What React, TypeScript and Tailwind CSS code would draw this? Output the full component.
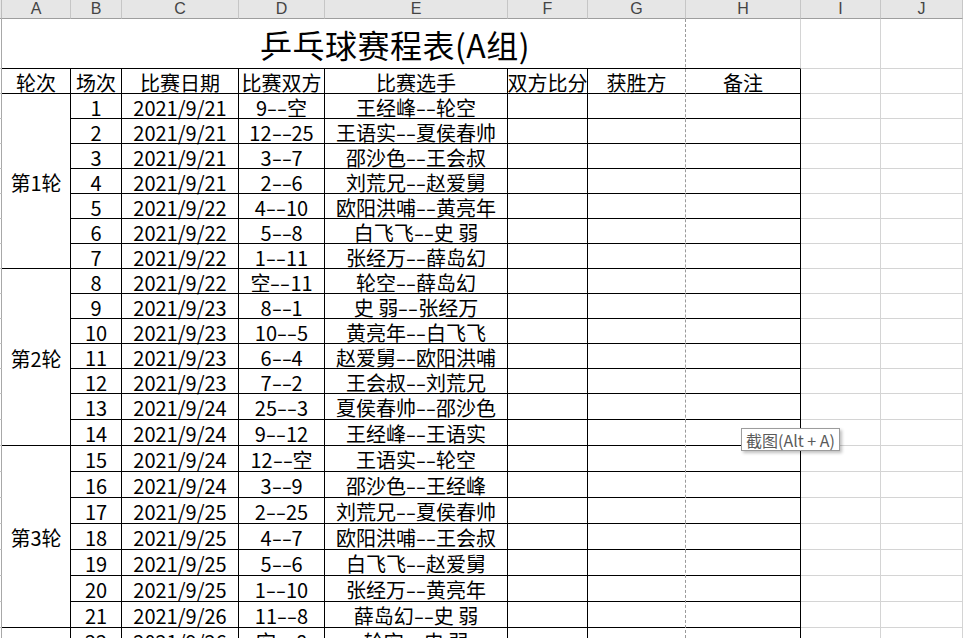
import React from 'react';

type Match = { no: number; date: string; pair: string; players: string };

const matches: Match[] = [
  { no: 1, date: '2021/9/21', pair: '9--空', players: '王经峰--轮空' },
  { no: 2, date: '2021/9/21', pair: '12--25', players: '王语实--夏侯春帅' },
  { no: 3, date: '2021/9/21', pair: '3--7', players: '邵沙色--王会叔' },
  { no: 4, date: '2021/9/21', pair: '2--6', players: '刘荒兄--赵爱舅' },
  { no: 5, date: '2021/9/22', pair: '4--10', players: '欧阳洪哺--黄亮年' },
  { no: 6, date: '2021/9/22', pair: '5--8', players: '白飞飞--史 弱' },
  { no: 7, date: '2021/9/22', pair: '1--11', players: '张经万--薛岛幻' },
  { no: 8, date: '2021/9/22', pair: '空--11', players: '轮空--薛岛幻' },
  { no: 9, date: '2021/9/23', pair: '8--1', players: '史 弱--张经万' },
  { no: 10, date: '2021/9/23', pair: '10--5', players: '黄亮年--白飞飞' },
  { no: 11, date: '2021/9/23', pair: '6--4', players: '赵爱舅--欧阳洪哺' },
  { no: 12, date: '2021/9/23', pair: '7--2', players: '王会叔--刘荒兄' },
  { no: 13, date: '2021/9/24', pair: '25--3', players: '夏侯春帅--邵沙色' },
  { no: 14, date: '2021/9/24', pair: '9--12', players: '王经峰--王语实' },
  { no: 15, date: '2021/9/24', pair: '12--空', players: '王语实--轮空' },
  { no: 16, date: '2021/9/24', pair: '3--9', players: '邵沙色--王经峰' },
  { no: 17, date: '2021/9/25', pair: '2--25', players: '刘荒兄--夏侯春帅' },
  { no: 18, date: '2021/9/25', pair: '4--7', players: '欧阳洪哺--王会叔' },
  { no: 19, date: '2021/9/25', pair: '5--6', players: '白飞飞--赵爱舅' },
  { no: 20, date: '2021/9/25', pair: '1--10', players: '张经万--黄亮年' },
  { no: 21, date: '2021/9/26', pair: '11--8', players: '薛岛幻--史 弱' },
  { no: 22, date: '2021/9/26', pair: '空--8', players: '轮空--史 弱' },
];

// first row index of each merged "轮次" cell
const rounds: Record<number, { label: string; span: string }> = {
  0: { label: '第1轮', span: 'row-span-7' },
  7: { label: '第2轮', span: 'row-span-7' },
  14: { label: '第3轮', span: 'row-span-7' },
  21: { label: '', span: 'row-span-1' },
};

const letters = ['A', 'B', 'C', 'D', 'E', 'F', 'G', 'H', 'I', 'J'];
const headers = ['轮次', '场次', '比赛日期', '比赛双方', '比赛选手', '双方比分', '获胜方', '备注'];

const cell = 'flex items-center justify-center whitespace-pre pt-[3px] border-r border-b border-black';
// G column: right edge is covered by the page-break line
const gCell = 'flex items-center justify-center pt-[3px] border-b border-black border-r border-r-white';
const gridCell = 'border-r border-b border-[#d4d4d4]';
const strip = 'border-r border-b border-[#c4c4c4] border-r-[#a8a8a8] bg-white';

// Excel's half-width "--" is wider than the hyphen of the CJK font
const Dashed = ({ text }: { text: string }) => {
  const parts = text.split('--');
  return (
    <span className="flex items-center">
      {parts[0]}
      <span className="inline-flex">
        <span className="inline-block w-[10px] text-center scale-x-150">-</span>
        <span className="inline-block w-[10px] text-center scale-x-150">-</span>
      </span>
      {parts[1]}
    </span>
  );
};

const App = () => {
  return (
    <div className="relative w-[963px] h-[638px] overflow-hidden bg-white text-black font-['Noto_Sans_CJK_SC',sans-serif]">
      <div className="grid grid-cols-[2px_69px_51px_117px_86px_183px_80px_98px_115px_80px_82px] grid-rows-[19px_50px_25px_25px_25px_25px_25px_25px_25px_25px_25px_25px_25px_25px_25px_26px_26px_26px_26px_26px_26px_26px_26px_26px_26px] text-[20px] leading-none">
        {/* column letters */}
        <div className="bg-[#e6e6e6] border-r border-b border-[#bdbdbd] border-b-[#9e9e9e]" />
        {letters.map((l) => (
          <div
            key={l}
            className="flex items-center justify-center bg-[#e6e6e6] border-r border-b border-[#c6c6c6] border-b-[#9e9e9e] text-[16px] text-[#444444] font-['Liberation_Sans',sans-serif]"
          >
            {l}
          </div>
        ))}

        {/* title row */}
        <div className={strip} />
        <div className="col-span-8 flex items-center justify-center border-b border-black border-r border-r-[#d4d4d4] text-[32px] pr-[12px] tracking-[0.5px]">
          乒乓球赛程表(A组)
        </div>
        <div className={gridCell} />
        <div className={gridCell} />

        {/* header row */}
        <div className={strip} />
        {headers.map((h, i) => (
          <div key={h} className={i === 6 ? gCell : cell}>
            {h}
          </div>
        ))}
        <div className={gridCell} />
        <div className={gridCell} />

        {matches.map((m, i) => (
          <React.Fragment key={m.no}>
            <div className={strip} />
            {rounds[i] && (
              <div className={`${rounds[i].span} ${cell}`}>{rounds[i].label}</div>
            )}
            <div className={cell}>{m.no}</div>
            <div className={cell}>{m.date}</div>
            <div className={cell}>
              <Dashed text={m.pair} />
            </div>
            <div className={cell}>
              <Dashed text={m.players} />
            </div>
            <div className={cell} />
            <div className={gCell} />
            <div className={cell} />
            <div className={gridCell} />
            <div className={gridCell} />
          </React.Fragment>
        ))}
      </div>

      {/* page break line between G and H */}
      <div className="absolute left-[685px] top-[19px] bottom-0 border-l border-dashed border-[#9a9a9a]" />

      {/* hover tooltip */}
      <div className="absolute left-[741px] top-[428px] h-[23px] px-[4px] flex items-center bg-white border border-[#9c9c9c] shadow-[2px_2px_3px_rgba(0,0,0,0.25)] text-[16px] text-[#5a5a5a] font-['Noto_Sans_CJK_SC',sans-serif] leading-none">
        截图(Alt + A)
      </div>
    </div>
  );
};

export default App;
